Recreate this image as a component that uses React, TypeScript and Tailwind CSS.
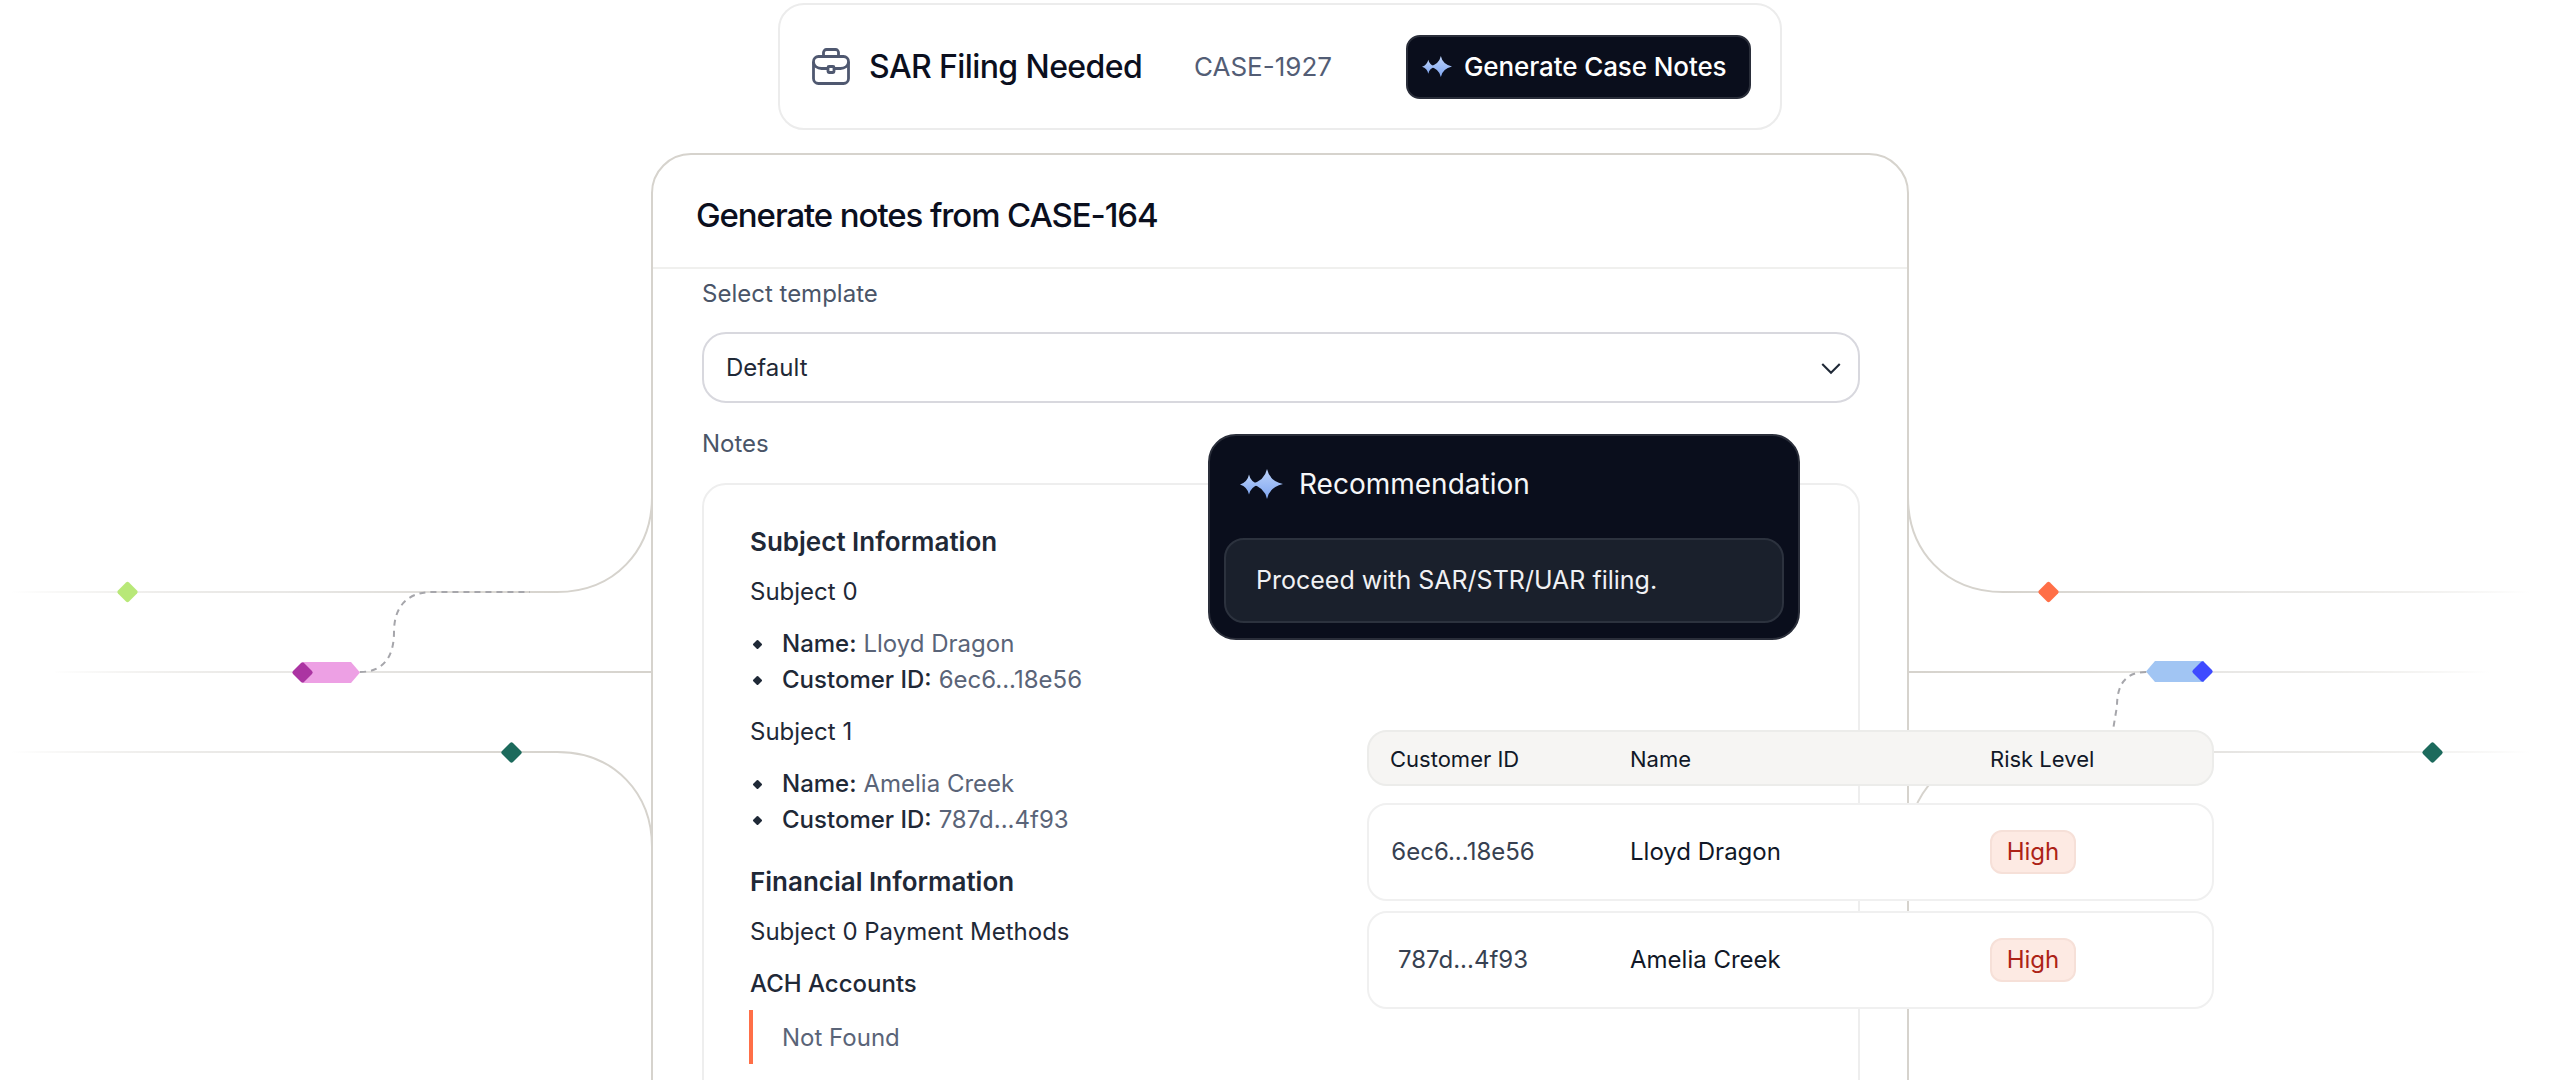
const Sparkle = ({ className, id }: { className: string; id: string }) => (
  <svg viewBox="0 0 43 30" className={className}>
    <defs>
      <linearGradient id={id} x1="0" y1="0" x2="0" y2="1">
        <stop offset="0" stopColor="#bcd2f9" />
        <stop offset="1" stopColor="#7fa6f2" />
      </linearGradient>
    </defs>
    <path fill={`url(#${id})`} d="M27 0Q29.500 12 43 15Q29.500 18 27 30Q24.500 18 11 15Q24.500 12 27 0Z" />
    <path fill={`url(#${id})`} d="M9 5.500Q10.500 13 19 15.500Q10.500 18 9 25.500Q7.500 18 0 15.500Q7.500 13 9 5.500Z" />
  </svg>
);

const Briefcase = () => (
  <svg viewBox="0 0 38 37" fill="none" stroke="#4f5870" strokeWidth="2.800" className="h-[37px] w-[38px]">
    <rect x="1.500" y="8.500" width="35" height="27" rx="5" />
    <path d="M11.500 8.500V4.500a3 3 0 0 1 3-3h9a3 3 0 0 1 3 3v4" />
    <path d="M1.500 14c0 4 4 6.500 8 6.500h6.500M22 20.500h6.500c4 0 8-2.500 8-6.500" />
    <rect x="16" y="18.500" width="6" height="6" rx="1" />
  </svg>
);

const diamond = (cx: number, cy: number) =>
  `M${cx - 1.500} ${cy - 9.500}Q${cx} ${cy - 11} ${cx + 1.500} ${cy - 9.500}L${cx + 9.500} ${cy - 1.500}Q${cx + 11} ${cy} ${cx + 9.500} ${cy + 1.500}L${cx + 1.500} ${cy + 9.500}Q${cx} ${cy + 11} ${cx - 1.500} ${cy + 9.500}L${cx - 9.500} ${cy + 1.500}Q${cx - 11} ${cy} ${cx - 9.500} ${cy - 1.500}Z`;

const Connectors = () => (
  <svg width="2560" height="1080" className="absolute left-0 top-0" fill="none">
    <defs>
      <linearGradient id="fadeLeft" gradientUnits="userSpaceOnUse" x1="10" y1="0" x2="557" y2="0">
        <stop offset="0" stopColor="#d6d3cd" stopOpacity="0" />
        <stop offset="0.5" stopColor="#e9e8e6" />
        <stop offset="1" stopColor="#d6d3cd" />
      </linearGradient>
      <linearGradient id="fadeMidLeft" gradientUnits="userSpaceOnUse" x1="50" y1="0" x2="640" y2="0">
        <stop offset="0" stopColor="#d6d3cd" stopOpacity="0" />
        <stop offset="0.45" stopColor="#e9e8e6" />
        <stop offset="1" stopColor="#d6d3cd" />
      </linearGradient>
      <linearGradient id="fadeRight" gradientUnits="userSpaceOnUse" x1="2530" y1="0" x2="2003" y2="0">
        <stop offset="0" stopColor="#d6d3cd" stopOpacity="0" />
        <stop offset="0.5" stopColor="#e9e8e6" />
        <stop offset="1" stopColor="#d6d3cd" />
      </linearGradient>
      <linearGradient id="fadeMidRight" gradientUnits="userSpaceOnUse" x1="2490" y1="0" x2="1920" y2="0">
        <stop offset="0" stopColor="#d6d3cd" stopOpacity="0" />
        <stop offset="0.45" stopColor="#e9e8e6" />
        <stop offset="1" stopColor="#d6d3cd" />
      </linearGradient>
    </defs>

    <g strokeWidth="2">
      <path stroke="url(#fadeLeft)" d="M10 592H557" />
      <path stroke="#d6d3cd" d="M557 592C615 592 652 550 652 497" />
      <path stroke="url(#fadeMidLeft)" d="M55 672H652" />
      <path stroke="url(#fadeLeft)" d="M10 752H557" />
      <path stroke="#d6d3cd" d="M557 752C615 752 652 794 652 847" />

      <path stroke="#d6d3cd" d="M1908 497C1908 550 1945 592 2003 592" />
      <path stroke="url(#fadeRight)" d="M2003 592H2530" />
      <path stroke="url(#fadeMidRight)" d="M1908 672H2490" />
      <path stroke="#d6d3cd" d="M1908 847C1908 794 1945 752 2003 752" />
      <path stroke="url(#fadeRight)" d="M2003 752H2530" />
    </g>

    <g stroke="#a6a6ab" strokeWidth="2" strokeDasharray="6 5">
      <path d="M360 672C384 672 394 656 394 632C394 606 408 592 432 592H530" />
      <path d="M2146 672C2126 672 2117 684 2117 706L2113 730" />
    </g>

    <path fill="#b8e878" d={diamond(127.500, 592)} />
    <path fill="#eda0e4" d="M303 662H351L360 672.500L351 683H303Z" />
    <path fill="#ab34a2" d={diamond(302.500, 672.500)} />
    <path fill="#1c6a5c" d={diamond(511.500, 752.500)} />
    <path fill="#ff6f47" d={diamond(2048.500, 592)} />
    <path fill="#a1c5f3" d="M2204 661H2155L2146 671.500L2155 682H2204Z" />
    <path fill="#3f4bff" d={diamond(2202.500, 671.500)} />
    <path fill="#1c6a5c" d={diamond(2432.500, 752.500)} />
  </svg>
);

const Bullet = () => <span className="h-[7px] w-[7px] shrink-0 rotate-45 rounded-[1px] bg-[#1f2937]" />;

const Field = ({ label, value }: { label: string; value: string }) => (
  <li className="flex h-[36px] items-center">
    <span className="ml-[4px] mr-[21px] flex w-[7px] justify-center">
      <Bullet />
    </span>
    <span className="font-medium text-[#1f2937]">{label}</span>
    <span className="ml-[7px] text-[#5a6478]">{value}</span>
  </li>
);

const customers = [
  { id: '6ec6...18e56', name: 'Lloyd Dragon' },
  { id: '787d...4f93', name: 'Amelia Creek' },
];

export default function App() {
  return (
    <div className="relative h-[1080px] w-full overflow-hidden bg-white font-['Inter',sans-serif]">
      <Connectors />

      <div className="relative flex flex-col items-center pt-[3px]">
        {/* case bar */}
        <div className="flex h-[127px] w-[1004px] items-center rounded-[26px] border-2 border-[#ececec] bg-white pl-[32px]">
          <Briefcase />
          <span className="ml-[19px] w-[325px] text-[32px] font-medium tracking-[-0.6px] text-[#0b0f1e]">SAR Filing Needed</span>
          <span className="w-[212px] text-[26px] text-[#535d75]">CASE-1927</span>
          <button className="flex h-[64px] w-[345px] items-center rounded-[14px] border-2 border-[#2a2e3a] bg-[#0a0e1c] pl-[14px] text-[26px] font-medium text-white">
            <Sparkle id="sparkBtn" className="h-[21px] w-[30px]" />
            <span className="ml-[12px] tracking-[-0.1px]">Generate Case Notes</span>
          </button>
        </div>

        {/* notes panel */}
        <div className="mt-[23px] h-[1000px] w-[1258px] rounded-[40px] border-2 border-[#d6d3cd] bg-white">
          <div className="flex h-[114px] items-center border-b-2 border-[#f0f0ee] pl-[43px] pt-[10px] text-[33px] font-medium tracking-[-1.1px] text-[#0b0f1e]">
            Generate notes from CASE-164
          </div>
          <div className="pl-[49px] pr-[47px] text-[24px] text-[#1f2937]">
            <div className="flex h-[50px] items-center text-[#4a5568]">Select template</div>
            <div className="mt-[13px] flex h-[71px] items-center justify-between rounded-[24px] border-2 border-[#d8d8de] pl-[22px] pr-[13px] pt-[1px]">
              <span>Default</span>
              <svg viewBox="0 0 24 24" fill="none" stroke="#1f2937" strokeWidth="1.800" className="h-[28px] w-[28px]">
                <path d="M4.500 8.500l7.500 7.500 7.500-7.500" />
              </svg>
            </div>
            <div className="mt-[24px] flex h-[34px] items-center text-[#4a5568]">Notes</div>
            <div className="mt-[22px] h-[700px] rounded-[24px] border-2 border-[#eeeeee] pl-[46px] pt-[36px]">
              <h3 className="flex h-[40px] items-center text-[26px] font-semibold text-[#1f2937]">Subject Information</h3>
              <p className="mt-[13px] flex h-[36px] items-center">Subject 0</p>
              <ul className="mt-[16px]">
                <Field label="Name:" value="Lloyd Dragon" />
                <Field label="Customer ID:" value="6ec6...18e56" />
              </ul>
              <p className="mt-[16px] flex h-[36px] items-center">Subject 1</p>
              <ul className="mt-[16px]">
                <Field label="Name:" value="Amelia Creek" />
                <Field label="Customer ID:" value="787d...4f93" />
              </ul>
              <h3 className="mt-[23px] flex h-[40px] items-center text-[26px] font-semibold text-[#1f2937]">Financial Information</h3>
              <p className="mt-[13px] flex h-[36px] items-center">Subject 0 Payment Methods</p>
              <p className="mt-[16px] flex h-[36px] items-center font-medium">ACH Accounts</p>
              <div className="ml-[-1px] mt-[8px] flex h-[54px] items-center border-l-4 border-[#ff6f47] pl-[29px] pt-[2px] text-[#5a6478]">Not Found</div>
            </div>
          </div>
        </div>
      </div>

      {/* recommendation popover */}
      <div className="absolute left-[1208px] top-[434px] h-[206px] w-[592px] rounded-[28px] border-2 border-[#2a2e3a] bg-[#0a0e1c] px-[14px]">
        <div className="flex h-[102px] items-center pb-[6px] pl-[16px] text-[28px] text-[#f5f6f8]">
          <Sparkle id="sparkRec" className="h-[30px] w-[43px]" />
          <span className="ml-[16px]">Recommendation</span>
        </div>
        <div className="flex h-[85px] items-center rounded-[20px] border-2 border-[#2c323e] bg-[#1a202c] pl-[30px] text-[25px] text-[#f0f1f4]">
          Proceed with SAR/STR/UAR filing.
        </div>
      </div>

      {/* customers table */}
      <div className="absolute left-[1367px] top-[730px] w-[847px] text-[24px]">
        <div className="grid h-[56px] grid-cols-[240px_360px_1fr] items-center rounded-[20px] border-2 border-[#ececea] bg-[#f6f5f3] pl-[21px] pt-[3px] text-[22px] text-[#111827]">
          <span>Customer ID</span>
          <span>Name</span>
          <span>Risk Level</span>
        </div>
        <div className="mt-[17px] flex flex-col gap-[10px]">
          {customers.map((c) => (
            <div
              key={c.id}
              className="grid h-[98px] grid-cols-[240px_360px_1fr] items-center rounded-[20px] border-2 border-[#f0f0f0] bg-white pl-[21px]"
            >
              <span className="w-[146px] text-center text-[#374151]">{c.id}</span>
              <span className="text-[#111827]">{c.name}</span>
              <span className="flex h-[44px] w-[86px] items-center justify-center rounded-[12px] border-2 border-[#f6e0d8] bg-[#fdeae3] text-[#ad2317]">High</span>
            </div>
          ))}
        </div>
      </div>
    </div>
  );
}
